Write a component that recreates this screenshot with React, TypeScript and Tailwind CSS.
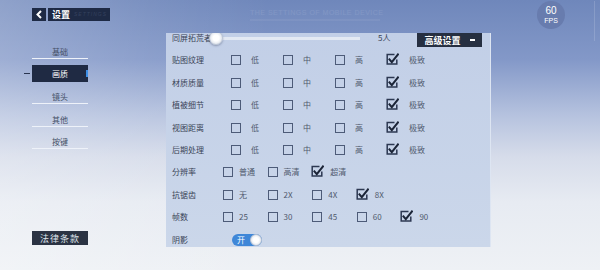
import React from "react";

const quality = ["贴图纹理", "材质质量", "植被细节", "视图距离", "后期处理"];
const levels = ["低", "中", "高", "极致"];

const extra = [
  { label: "分辨率", opts: ["普通", "高清", "超清"], on: 2 },
  { label: "抗锯齿", opts: ["无", "2X", "4X", "8X"], on: 3 },
  { label: "帧数", opts: ["25", "30", "45", "60", "90"], on: 4 },
];

const nav = ["基础", "画质", "镜头", "其他", "按键"];

function Box({ on }: { on?: boolean }) {
  if (on) {
    return (
      <svg width="13" height="12" viewBox="0 0 13 12" className="shrink-0 -ml-[1px] -mt-[2px]">
        <path d="M8.5 1.5H1.2v9.6h9.6V6.5" fill="none" stroke="#2c3852" strokeWidth="1.5" />
        <path d="M2.8 5.6l3 3.6L12.6 0.6" fill="none" stroke="#1b2437" strokeWidth="2" />
      </svg>
    );
  }
  return <span className="w-[10px] h-[10px] border-[1.5px] border-[#4d5b78] shrink-0" />;
}

export default function App() {
  return (
    <div className="w-[600px] h-[270px] overflow-hidden flex font-['Noto_Sans_CJK_SC','Liberation_Sans',sans-serif] bg-[image:linear-gradient(90deg,rgba(255,255,255,0.22)_0%,rgba(255,255,255,0.08)_25%,rgba(255,255,255,0)_45%),linear-gradient(180deg,#6f87bb_0%,#8398c8_22%,#b4c1de_42%,#d6dcea_58%,#e7ebf2_75%,#eef1f5_100%)]">
      {/* left column: title + tabs */}
      <div className="w-[166px] shrink-0 pl-[32px] pt-[8px] flex flex-col pb-[25px]">
        <div className="flex items-center gap-[2px] h-[13px]">
          <div className="w-[14px] h-[13px] bg-[#1e2a45] flex items-center justify-center">
            <svg width="8" height="9" viewBox="0 0 8 9">
              <path d="M6 1L2.5 4.5L6 8" fill="none" stroke="#ffffff" strokeWidth="2" />
            </svg>
          </div>
          <div className="w-[62px] h-[13px] bg-[#1e2a45] flex items-center pl-[4px] gap-[4px]">
            <span className="text-[9px] font-bold text-white leading-none">设置</span>
            <span className="text-[5px] text-[#34415e] leading-none tracking-[1px] font-['Liberation_Sans',sans-serif] italic">
              SETTINGS
            </span>
          </div>
        </div>

        <div className="mt-[20px] w-[56px] flex flex-col">
          {nav.map((n, i) => (
            <div key={n} className="h-[22.5px]">
              {i === 1 ? (
                <div className="relative mt-[1.5px] h-[17px] bg-[#1f2a43] flex items-center justify-center">
                  <span className="text-[8px] text-white leading-none">{n}</span>
                  <span className="absolute right-0 top-[5px] w-[2px] h-[7px] bg-[#3d8fe6]" />
                  <span className="absolute -left-[8px] top-[8px] w-[6px] h-px bg-[#2a3550]" />
                </div>
              ) : (
                <div className="mt-[5px] h-[13px] flex items-center justify-center border-b border-[#eef2f9]">
                  <span className="text-[8px] text-[#434e66] leading-none">{n}</span>
                </div>
              )}
            </div>
          ))}
        </div>

        <div className="mt-auto w-[56px] h-[14px] bg-[#2b3343] flex items-center justify-center">
          <span className="text-[9px] text-[#dfe4ec] leading-none tracking-[1px]">法律条款</span>
        </div>
      </div>

      {/* settings panel with faint heading above */}
      <div className="w-[325px] shrink-0 flex flex-col">
        <div className="h-[33px] pl-[84px] pt-[9px] flex flex-col gap-[3px]">
          <span className="text-[7px] leading-none tracking-[0.5px] text-white/10 font-['Liberation_Sans',sans-serif]">
            THE SETTINGS OF MOBILE DEVICE
          </span>
          <span className="w-[130px] h-[2px] bg-white/[0.06]" />
        </div>

        <div className="relative h-[214px] bg-[linear-gradient(180deg,#c2cfe7,#cbd7ea)] border-r border-[#dde5f2] overflow-hidden">
          <div className="absolute right-[8px] top-0 w-[65px] h-[14px] bg-[#262f41] flex items-center justify-center gap-[9px] z-10">
            <span className="text-[9px] font-bold text-white leading-none">高级设置</span>
            <span className="w-[5px] h-[1.5px] bg-white" />
          </div>

          <div className="-mt-[6.2px] pl-[6px] flex flex-col text-[8px] leading-none">
            <div className="h-[22.4px] flex items-center">
              <span className="w-[40px] text-[#3a4457]">同屏拓荒者</span>
              <div className="relative w-[151px] h-[14px] -ml-[3px] flex items-center">
                <div className="ml-[7px] flex-1 h-[3px] bg-[#e3e9f3]" />
                <span className="absolute left-0 top-0 w-[14px] h-[14px] rounded-full bg-[radial-gradient(circle,#ffffff_35%,#dfe4ec_75%)] border border-[#bcc5d4] shadow-[0_1px_2px_rgba(40,50,80,0.35)]" />
              </div>
              <span className="ml-[18px] text-[#3a4457]">5人</span>
            </div>

            {quality.map((q) => (
              <div key={q} className="h-[22.4px] flex items-center">
                <span className="w-[59px] text-[#3a4457]">{q}</span>
                {levels.map((l, j) => (
                  <div key={l} className="w-[52px] flex items-center gap-[10px]">
                    <Box on={j === 3} />
                    <span className="text-[#4f596d]">{l}</span>
                  </div>
                ))}
              </div>
            ))}

            {extra.map((r) => (
              <div key={r.label} className="h-[22.4px] flex items-center">
                <span className="w-[51px] text-[#3a4457]">{r.label}</span>
                {r.opts.map((o, j) => (
                  <div key={o} className="w-[44.6px] flex items-center gap-[6px]">
                    <Box on={j === r.on} />
                    <span className="text-[#4f596d]">{o}</span>
                  </div>
                ))}
              </div>
            ))}

            <div className="h-[22.4px] flex items-center">
              <span className="w-[60px] text-[#3a4457]">阴影</span>
              <div className="w-[30px] h-[12px] rounded-full bg-[#3f87d8] flex items-center justify-between pl-[5px]">
                <span className="text-[8px] text-white leading-none">开</span>
                <span className="w-[12px] h-[12px] rounded-full bg-[radial-gradient(circle,#ffffff_35%,#dfe4ec_80%)] border border-[#b7c2d4]" />
              </div>
            </div>
          </div>
        </div>
      </div>

      {/* fps readout */}
      <div className="flex-1 flex justify-between pt-[1px] pr-[5px]">
        <div className="ml-[46px] w-[28px] h-[28px] rounded-full bg-[#687cae] flex flex-col items-center justify-center font-['Liberation_Sans',sans-serif] text-white leading-none">
          <span className="text-[10px]">60</span>
          <span className="text-[7px] mt-[1px]">FPS</span>
        </div>
        <div className="w-px h-[40px] bg-white/15" />
      </div>
    </div>
  );
}
